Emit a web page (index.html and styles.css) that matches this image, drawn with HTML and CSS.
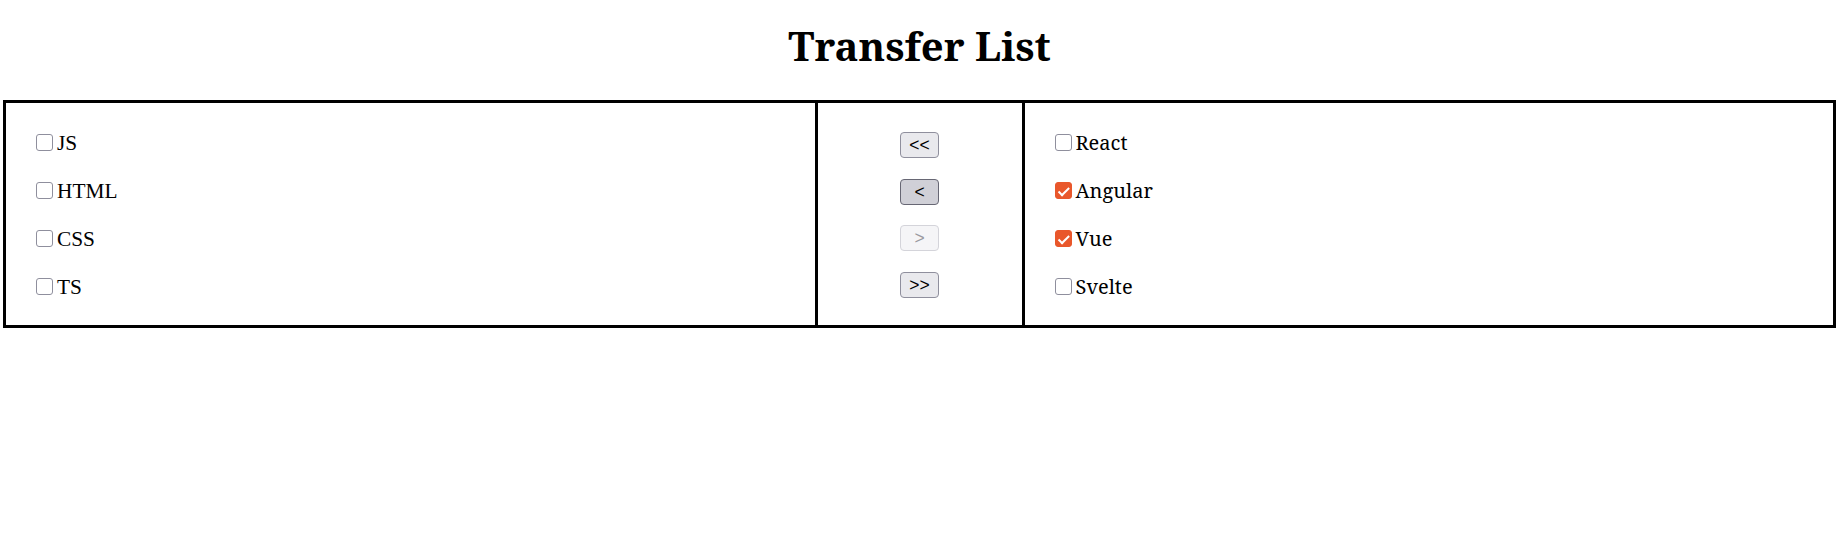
FILE: index.html
```html
<!DOCTYPE html>
<html lang="en">
<head>
<meta charset="utf-8">
<title>Transfer List</title>
<link rel="stylesheet" href="styles.css">
</head>
<body>
<h1 class="title">Transfer List</h1>
<div class="transfer">
  <div class="list list-left">
    <label class="item"><input type="checkbox"><span>JS</span></label>
    <label class="item"><input type="checkbox"><span>HTML</span></label>
    <label class="item"><input type="checkbox"><span>CSS</span></label>
    <label class="item"><input type="checkbox"><span>TS</span></label>
  </div>
  <div class="controls">
    <button class="btn" type="button">&lt;&lt;</button>
    <button class="btn btn-hover" type="button">&lt;</button>
    <button class="btn" type="button" disabled>&gt;</button>
    <button class="btn" type="button">&gt;&gt;</button>
  </div>
  <div class="list list-right">
    <label class="item"><input type="checkbox"><span>React</span></label>
    <label class="item"><input type="checkbox" checked><span>Angular</span></label>
    <label class="item"><input type="checkbox" checked><span>Vue</span></label>
    <label class="item"><input type="checkbox"><span>Svelte</span></label>
  </div>
</div>
</body>
</html>
```
FILE: styles.css
```css
html, body {
  margin: 0;
  padding: 0;
  background: #fff;
  color: #000;
}

.title {
  margin: 0 7px 34px 3px;
  padding-top: 26px;
  font-family: "Noto Serif", "DejaVu Serif", serif;
  font-weight: 700;
  font-size: 40px;
  line-height: 40px;
  text-align: center;
}

.transfer {
  display: flex;
  margin: 0 7px 0 3px;
  border: 3px solid #000;
  height: 222px;
}

.list {
  flex: 1 1 0;
  display: flex;
  flex-direction: column;
  padding: 15.5px 0 14.5px 30px;
}

.item {
  height: 48px;
  display: flex;
  align-items: center;
  font-size: 21.33px;
  line-height: 26px;
}

.list-left .item {
  font-family: "Liberation Serif", "Times New Roman", serif;
}

.list-right .item {
  font-family: "Noto Serif", "DejaVu Serif", serif;
  font-size: 20px;
}

.item span {
  padding-top: 1px;
}

.item input {
  appearance: none;
  -webkit-appearance: none;
  position: relative;
  flex: none;
  width: 17px;
  height: 17px;
  margin: 0 4px 0 0;
  border: 1px solid #8f8f9d;
  border-radius: 3px;
  background: #fff;
}

.item input:checked {
  background: #e9572b;
  border-color: #e9572b;
}

.item input:checked::after {
  content: "";
  position: absolute;
  left: 5px;
  top: 1.5px;
  width: 4px;
  height: 8.5px;
  border: solid #fff;
  border-width: 0 2.5px 2.5px 0;
  transform: rotate(45deg);
}

.controls {
  flex: none;
  width: 210px;
  box-sizing: border-box;
  border-left: 3px solid #000;
  border-right: 3px solid #000;
  display: flex;
  flex-direction: column;
  align-items: center;
  justify-content: center;
  gap: 20.5px;
  padding-top: 1.5px;
}

.btn {
  width: 39px;
  height: 26px;
  padding: 0;
  border: 1px solid #8f8f9d;
  border-radius: 4px;
  background: #e9e9ed;
  color: #000;
  font-family: "Liberation Sans", Arial, sans-serif;
  font-size: 17.5px;
  line-height: 22px;
}

.btn-hover {
  background: #d0d0d7;
  border-color: #676774;
}

.btn:disabled {
  background: #f5f5f7;
  border-color: #d4d4da;
  color: #9a9a9f;
}
```
